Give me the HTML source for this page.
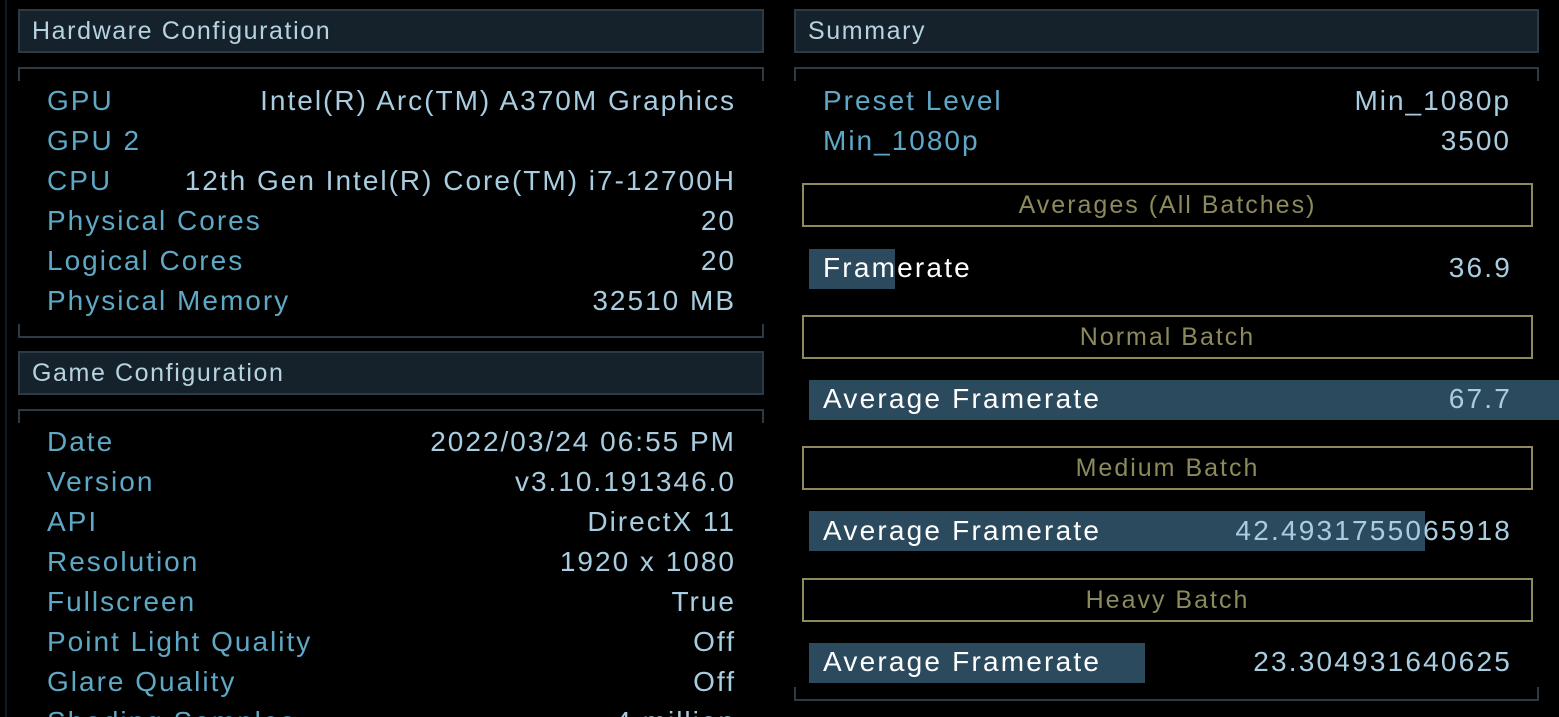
<!DOCTYPE html>
<html><head><meta charset="utf-8"><style>
*{margin:0;padding:0;box-sizing:border-box}
html,body{width:1559px;height:717px;overflow:hidden}
body{background:#000;position:relative;font-family:"Liberation Sans",sans-serif;}
.hdr{position:absolute;height:44px;background:#16222b;border:2px solid #2b3a44;color:#b6d3e0;font-size:25px;line-height:40px;padding-left:12px;letter-spacing:1.6px}
.bt{position:absolute;border:2px solid #2b3a44;border-bottom:none;height:14px}
.bb{position:absolute;border:2px solid #2b3a44;border-top:none;height:14px}
.row{position:absolute;font-size:28px;line-height:40px;height:40px;letter-spacing:2px}
.l{position:absolute;color:#5ea8c6;white-space:nowrap}
.v{position:absolute;color:#a9cde0;white-space:nowrap;text-align:right}
.gold{position:absolute;left:802px;width:731px;height:44px;border:2px solid #8e8a5c;color:#8c8a5c;font-size:25px;line-height:40px;text-align:center;letter-spacing:2px}
.bar{position:absolute;left:809px;height:40px;background:#2c4a5e}
.fl{position:absolute;left:823px;color:#fff;font-size:28px;line-height:40px;white-space:nowrap;letter-spacing:2.2px}
.fv{position:absolute;right:47px;color:#a9cde0;font-size:28px;line-height:40px;white-space:nowrap;letter-spacing:2.2px}
</style></head><body>
<div style="position:absolute;left:5px;top:0;width:2px;height:717px;background:#111a20"></div>
<div class="hdr" style="left:18px;top:9px;width:746px">Hardware Configuration</div>
<div class="bt" style="left:18px;top:67px;width:746px"></div>
<div class="bb" style="left:18px;top:324px;width:746px"></div>
<div class="hdr" style="left:18px;top:351px;width:746px">Game Configuration</div>
<div class="bt" style="left:18px;top:409px;width:746px"></div>

<div class="hdr" style="left:794px;top:9px;width:745px">Summary</div>
<div class="bt" style="left:794px;top:67px;width:745px"></div>
<div class="bb" style="left:794px;top:687px;width:745px"></div>

<div id="L"></div>
<script>
function rows(items,top,lx,rx){let h='';items.forEach((it,i)=>{const y=top+i*40;h+=`<div class="row" style="top:${y}px;left:0;width:1559px"><span class="l" style="left:${lx}px">${it[0]}</span><span class="v" style="right:${1559-rx-1}px">${it[1]}</span></div>`});return h}
let h='';
h+=rows([["GPU","Intel(R) Arc(TM) A370M Graphics"],["GPU 2",""],["CPU","12th Gen Intel(R) Core(TM) i7-12700H"],["Physical Cores","20"],["Logical Cores","20"],["Physical Memory","32510 MB"]],81,47,735);
h+=rows([["Date","2022/03/24 06:55 PM"],["Version","v3.10.191346.0"],["API","DirectX 11"],["Resolution","1920 x 1080"],["Fullscreen","True"],["Point Light Quality","Off"],["Glare Quality","Off"],["Shading Samples","4 million"]],422,47,735);
h+=rows([["Preset Level","Min_1080p"],["Min_1080p","3500"]],81,823,1510);
document.getElementById('L').innerHTML=h;
</script>

<div class="gold" style="top:183px">Averages (All Batches)</div>
<div class="bar" style="top:249px;width:86px"></div>
<div class="fl" style="top:248px">Framerate</div><div class="fv" style="top:248px">36.9</div>

<div class="gold" style="top:315px">Normal Batch</div>
<div class="bar" style="top:380px;width:750px"></div>
<div class="fl" style="top:379px">Average Framerate</div><div class="fv" style="top:379px">67.7</div>

<div class="gold" style="top:446px">Medium Batch</div>
<div class="bar" style="top:511px;width:616px"></div>
<div class="fl" style="top:511px">Average Framerate</div><div class="fv" style="top:511px">42.4931755065918</div>

<div class="gold" style="top:578px">Heavy Batch</div>
<div class="bar" style="top:643px;width:336px"></div>
<div class="fl" style="top:642px">Average Framerate</div><div class="fv" style="top:642px">23.304931640625</div>
</body></html>
